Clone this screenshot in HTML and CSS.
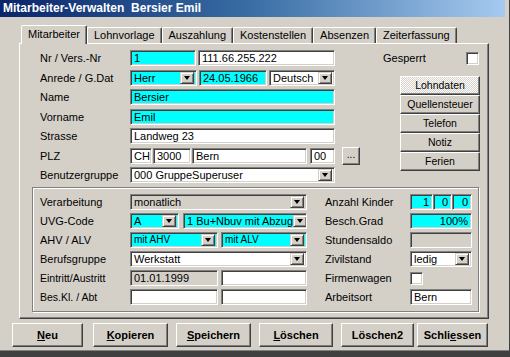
FILE: index.html
```html
<!DOCTYPE html>
<html>
<head>
<meta charset="utf-8"/>
<title>Mitarbeiter-Verwalten</title>
<link rel="stylesheet" href="styles.css">
</head>
<body>
  <div class="window">
    <div class="titlebar">Mitarbeiter-Verwalten  Bersier Emil</div>

    <div class="tabs">
      <div class="tab active">Mitarbeiter</div>
      <div class="tab">Lohnvorlage</div>
      <div class="tab">Auszahlung</div>
      <div class="tab">Kostenstellen</div>
      <div class="tab">Absenzen</div>
      <div class="tab">Zeiterfassung</div>
    </div>

    <div class="panel">
      <div class="upper">
        <div class="form">
          <div class="lbl">Nr / Vers.-Nr</div>
          <div class="fields">
            <div class="f cyan nr">1</div>
            <div class="f vers">111.66.255.222</div>
          </div>

          <div class="lbl">Anrede / G.Dat</div>
          <div class="fields">
            <div class="f sel cyan anrede"><span>Herr</span><span class="arrow"></span></div>
            <div class="f cyan gdat">24.05.1966</div>
            <div class="f sel sprache"><span>Deutsch</span><span class="arrow"></span></div>
          </div>

          <div class="lbl">Name</div>
          <div class="f cyan">Bersier</div>

          <div class="lbl">Vorname</div>
          <div class="f cyan">Emil</div>

          <div class="lbl">Strasse</div>
          <div class="f">Landweg 23</div>

          <div class="lbl">PLZ</div>
          <div class="fields plzrow">
            <div class="f land">CH</div>
            <div class="f plz">3000</div>
            <div class="f ort">Bern</div>
            <div class="f kanton">00</div>
          </div>
          <div class="dots">...</div>

          <div class="lbl">Benutzergruppe</div>
          <div class="f sel"><span>000 GruppeSuperuser</span><span class="arrow"></span></div>
        </div>

        <div class="side">
          <div class="gesperrt">
            <span>Gesperrt</span>
            <span class="check"></span>
          </div>
          <div class="sidebtns">
            <div class="sbtn pressed">Lohndaten</div>
            <div class="sbtn">Quellensteuer</div>
            <div class="sbtn">Telefon</div>
            <div class="sbtn">Notiz</div>
            <div class="sbtn">Ferien</div>
          </div>
        </div>
      </div>

      <div class="group">
        <div class="gleft">
          <div class="lbl">Verarbeitung</div>
          <div class="f sel gray"><span>monatlich</span><span class="arrow"></span></div>

          <div class="lbl">UVG-Code</div>
          <div class="fields">
            <div class="f sel cyan uvg"><span>A</span><span class="arrow"></span></div>
            <div class="f sel cyan uvgtext"><span>1 Bu+Nbuv mit Abzug</span><span class="arrow"></span></div>
          </div>

          <div class="lbl">AHV / ALV</div>
          <div class="fields">
            <div class="f sel cyan half small"><span>mit AHV</span><span class="arrow"></span></div>
            <div class="f sel cyan half2 small"><span>mit ALV</span><span class="arrow"></span></div>
          </div>

          <div class="lbl">Berufsgruppe</div>
          <div class="f sel"><span>Werkstatt</span><span class="arrow"></span></div>

          <div class="lbl small">Eintritt/Austritt</div>
          <div class="fields">
            <div class="f gray half">01.01.1999</div>
            <div class="f half2"></div>
          </div>

          <div class="lbl small">Bes.Kl. / Abt</div>
          <div class="fields">
            <div class="f half"></div>
            <div class="f half2"></div>
          </div>
        </div>

        <div class="gright">
          <div class="lbl">Anzahl Kinder</div>
          <div class="fields kinder">
            <div class="f cyan num k1">1</div>
            <div class="f cyan num k2">0</div>
            <div class="f cyan num k3">0</div>
          </div>

          <div class="lbl">Besch.Grad</div>
          <div class="f cyan num">100%</div>

          <div class="lbl">Stundensaldo</div>
          <div class="f gray"></div>

          <div class="lbl">Zivilstand</div>
          <div class="f sel"><span>ledig</span><span class="arrow"></span></div>

          <div class="lbl">Firmenwagen</div>
          <div><span class="check"></span></div>

          <div class="lbl">Arbeitsort</div>
          <div class="f">Bern</div>
        </div>
      </div>
    </div>

    <div class="buttons">
      <div class="btn neu"><u>N</u>eu</div>
      <div class="btn kopieren"><u>K</u>opieren</div>
      <div class="btn speichern"><u>S</u>peichern</div>
      <div class="btn loeschen"><u>L</u>öschen</div>
      <div class="btn loeschen2">Löschen2</div>
      <div class="btn schliessen">Schli<u>e</u>ssen</div>
    </div>

    <div class="bottomedge"></div>
  </div>
</body>
</html>
```

FILE: styles.css
```css
*{
  margin:0;
  padding:0;
  box-sizing:border-box;
}
body{
  background:#d4d0c8;
  font-family:"Liberation Sans", Arial, sans-serif;
  font-size:11px;
  color:#000;
}
.window{
  width:510px;
  height:357px;
  background:#d4d0c8;
  border-right:1px solid #404040;
  overflow:hidden;
}
.titlebar{
  height:17px;
  margin-right:4px;
  padding-left:3px;
  line-height:17px;
  font-size:12px;
  font-weight:bold;
  color:#fff;
  white-space:pre;
  background:linear-gradient(to right, #0a246a, #3a6ea5 50%, #a6caf0);
}

/* Reiter */
.tabs{
  display:flex;
  align-items:flex-end;
  margin:8px 0 0 21px;
  height:18px;
}
.tab{
  position:relative;
  height:16px;
  padding:0 6px;
  line-height:15px;
  border-top:1px solid #fff;
  border-left:1px solid #fff;
  border-right:1px solid #404040;
  box-shadow:inset -1px 0 #808080;
  border-radius:2px 2px 0 0;
  background:#d4d0c8;
}
.tab.active{
  height:19px;
  margin-bottom:-1px;
  line-height:17px;
  z-index:1;
}
.panel{
  margin-left:19px;
  width:470px;
  height:276px;
  padding:6px 0 0 20px;
  border-top:1px solid #fff;
  border-left:1px solid #fff;
  border-right:1px solid #404040;
  border-bottom:1px solid #404040;
  box-shadow:inset -1px -1px #808080;
}

/* Eingabefelder */
.upper{
  display:flex;
}
.form{
  display:grid;
  grid-template-columns:90px 205px 25px;
  grid-auto-rows:16px;
  row-gap:3.5px;
  align-items:center;
}
.lbl{
  grid-column:1;
  white-space:nowrap;
}
.lbl.small{
  font-size:10.5px;
}
.fields{
  display:flex;
  gap:2px;
  height:16px;
}
.f{
  height:16px;
  padding:0 3px;
  line-height:14px;
  white-space:nowrap;
  overflow:hidden;
  background:#fff;
  border:1px solid;
  border-color:#808080 #fff #fff #808080;
  box-shadow:inset 1px 1px #404040, inset -1px -1px #d4d0c8;
}
.f.small{
  font-size:10px;
}
.cyan{
  background:#00ffff;
}
.gray{
  background:#d4d0c8;
}
.num{
  text-align:right;
}
.sel{
  display:flex;
  justify-content:space-between;
  align-items:center;
  padding-right:2px;
}
.arrow{
  display:flex;
  justify-content:center;
  align-items:center;
  flex:none;
  width:14px;
  height:12px;
  background:#d4d0c8;
  border:1px solid;
  border-color:#d4d0c8 #404040 #404040 #d4d0c8;
  box-shadow:inset 1px 1px #fff, inset -1px -1px #808080;
}
.arrow::after{
  content:"";
  width:0;
  height:0;
  border-left:3.5px solid transparent;
  border-right:3.5px solid transparent;
  border-top:4px solid #000;
}
.nr{ width:66px; }
.vers{ width:137px; }
.anrede{ width:67px; }
.gdat{ width:68px; }
.sprache{ width:66px; }
.plzrow{ gap:1px; }
.land{ width:22px; }
.plz{ width:38px; }
.ort{ width:115px; margin-right:2px; }
.kanton{ width:25px; }
.dots{
  width:18px;
  height:18px;
  margin-left:7px;
  line-height:14px;
  text-align:center;
  font-size:10px;
  border:1px solid;
  border-color:#fff #404040 #404040 #fff;
  box-shadow:inset -1px -1px #808080;
}
.check{
  display:block;
  width:13px;
  height:13px;
  background:#fff;
  border:1px solid;
  border-color:#808080 #fff #fff #808080;
  box-shadow:inset 1px 1px #404040, inset -1px -1px #d4d0c8;
}

/* rechte Knoepfe */
.side{
  margin-left:23px;
  width:97px;
}
.gesperrt{
  display:flex;
  justify-content:space-between;
  align-items:center;
  height:16px;
  padding-right:1px;
}
.sidebtns{
  margin:10px 0 0 17px;
  width:80px;
}
.sbtn{
  height:19px;
  line-height:17px;
  text-align:center;
  font-size:10.5px;
  border:1px solid;
  border-color:#fff #404040 #404040 #fff;
  box-shadow:inset -1px -1px #808080;
}
.sbtn.pressed{
  background-color:#fff;
  background-image:repeating-conic-gradient(#d4d0c8 0 25%, #fff 0 50%);
  background-size:2px 2px;
}

/* Gruppe unten */
.group{
  display:flex;
  width:447px;
  height:125px;
  margin:4px 0 0 -8px;
  padding:6px 0 0 7px;
  border:1px solid #808080;
  box-shadow:inset 1px 1px #fff, 1px 1px #fff;
}
.gleft{
  display:grid;
  grid-template-columns:90px 177px;
  grid-auto-rows:16px;
  row-gap:3px;
  align-items:center;
}
.uvg{ width:49px; }
.uvgtext{ width:124px; margin-left:2px; }
.half{ width:88px; }
.half2{ width:86px; margin-left:1px; }
.gright{
  display:grid;
  grid-template-columns:85px 62px;
  grid-auto-rows:16px;
  row-gap:3px;
  align-items:center;
  margin-left:18px;
}
.kinder{
  gap:0;
}
.k1{ width:23px; }
.k2{ width:19px; }
.k3{ width:20px; }

/* Knopfleiste */
.buttons{
  display:flex;
  margin:4px 0 0 12px;
  height:24px;
}
.btn{
  height:24px;
  line-height:22px;
  text-align:center;
  font-weight:bold;
  border:1px solid;
  border-color:#fff #404040 #404040 #fff;
  box-shadow:inset -1px -1px #808080;
}
.neu{ width:71px; }
.kopieren{ width:75px; margin-left:10px; }
.speichern{ width:75px; margin-left:8px; }
.loeschen{ width:74px; margin-left:8px; }
.loeschen2{ width:73px; margin-left:8px; }
.schliessen{ width:71px; margin-left:3px; }
.bottomedge{
  margin-top:3px;
  height:7px;
  background:#404040;
  border-top:1px solid #808080;
}
```
